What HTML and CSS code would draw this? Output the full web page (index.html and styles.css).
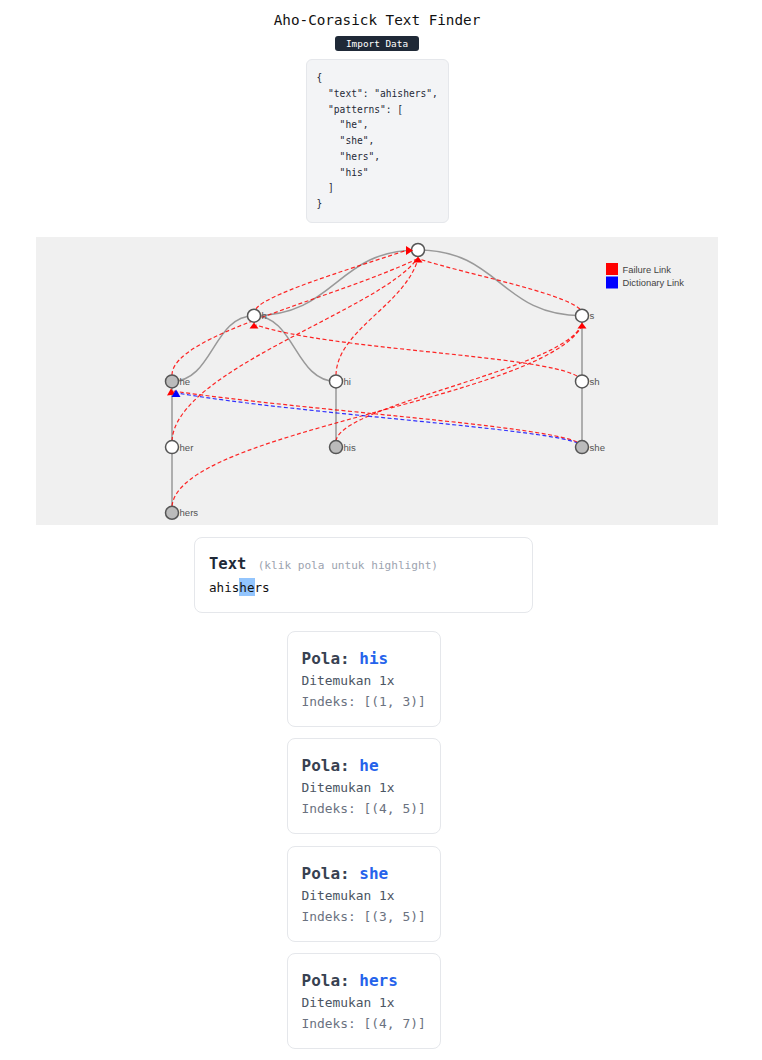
FILE: index.html
```html
<!DOCTYPE html>
<html>
<head>
<meta charset="utf-8">
<title>Aho-Corasick Text Finder</title>
<link rel="stylesheet" href="styles.css">
</head>
<body>
<div class="page">
  <h1 class="title">Aho-Corasick Text Finder</h1>
  <button class="import-btn">Import Data</button>
  <pre class="json-box">{
  "text": "ahishers",
  "patterns": [
    "he",
    "she",
    "hers",
    "his"
  ]
}</pre>
  <div class="graph">
    <svg class="graph-svg" width="682" height="288" viewBox="0 0 682 288">
      <g transform="translate(-36,-237)">
        <g class="tree-links">
          <path d="M418,250 C336,250 336,315.7 254,315.7"/>
          <path d="M418,250 C500,250 500,315.7 582,315.7"/>
          <path d="M254,315.7 C213,315.7 213,381.4 172,381.4"/>
          <path d="M254,315.7 C295,315.7 295,381.4 336,381.4"/>
          <path d="M582,315.7 L582,381.4"/>
          <path d="M172,381.4 L172,447.1"/>
          <path d="M172,447.1 L172,512.8"/>
          <path d="M336,381.4 L336,447.1"/>
          <path d="M582,381.4 L582,447.1"/>
        </g>
        <g class="fail-links">
          <path d="M256,309 C265,295 340,272 406,250.5"/>
          <path d="M580,309 C560,292 470,275 419,259"/>
          <path d="M172,375 C172,335 330,300 417,259"/>
          <path d="M172,441 C175,370 380,310 417,259"/>
          <path d="M336,375 C337,330 405,305 418,259"/>
          <path d="M577,376 C540,355 330,350 256,325"/>
          <path d="M336,441 C340,405 560,370 581,326"/>
          <path d="M172,506 C180,430 540,400 582,326"/>
          <path d="M577,442 C540,425 300,410 173,391"/>
        </g>
        <g class="dict-links">
          <path d="M578,443 C540,428 300,414 177,393"/>
        </g>
        <g class="nodes">
          <circle cx="418" cy="250" r="6.5" class="node"/>
          <circle cx="254" cy="315.7" r="6.5" class="node"/>
          <circle cx="582" cy="315.7" r="6.5" class="node"/>
          <circle cx="172" cy="381.4" r="6.5" class="node out"/>
          <circle cx="336" cy="381.4" r="6.5" class="node"/>
          <circle cx="582" cy="381.4" r="6.5" class="node"/>
          <circle cx="172" cy="447.1" r="6.5" class="node"/>
          <circle cx="336" cy="447.1" r="6.5" class="node out"/>
          <circle cx="582" cy="447.1" r="6.5" class="node out"/>
          <circle cx="172" cy="512.8" r="6.5" class="node out"/>
        </g>
        <g class="labels">
          <text x="261.5" y="319.2">h</text>
          <text x="589.5" y="319.2">s</text>
          <text x="179.5" y="384.9">he</text>
          <text x="343.5" y="384.9">hi</text>
          <text x="589.5" y="384.9">sh</text>
          <text x="179.5" y="450.6">her</text>
          <text x="343.5" y="450.6">his</text>
          <text x="589.5" y="450.6">she</text>
          <text x="179.5" y="516.3">hers</text>
        </g>
        <g class="arrows-red">
          <polygon points="406,246 413,250.5 406,255"/>
          <polygon points="418,256.5 422.5,262.5 413.5,262.5"/>
          <polygon points="254,322.5 258.5,328.5 249.5,328.5"/>
          <polygon points="582,322.5 586.5,328.5 577.5,328.5"/>
          <polygon points="171,388.5 175.5,394.5 167,395.5"/>
        </g>
        <g class="arrows-blue">
          <polygon points="176,389.5 180.5,397 171.5,397"/>
        </g>
        <g class="legend">
          <rect x="606" y="263" width="12" height="12" class="leg-red"/>
          <rect x="606" y="276.5" width="12" height="12" class="leg-blue"/>
          <text x="622.5" y="272.8">Failure Link</text>
          <text x="622.5" y="286.3">Dictionary Link</text>
        </g>
      </g>
    </svg>
  </div>
  <div class="results">
    <div class="text-card">
      <h2 class="text-head">Text <span class="hint">(klik pola untuk highlight)</span></h2>
      <div class="text-body">ahis<mark class="hl">he</mark>rs</div>
    </div>
    <div class="pattern-list">
      <div class="pattern-card">
        <h3 class="pola">Pola: <span class="pat">his</span></h3>
        <div class="found">Ditemukan 1x</div>
        <div class="found idx">Indeks: [(1, 3)]</div>
      </div>
      <div class="pattern-card">
        <h3 class="pola">Pola: <span class="pat">he</span></h3>
        <div class="found">Ditemukan 1x</div>
        <div class="found idx">Indeks: [(4, 5)]</div>
      </div>
      <div class="pattern-card">
        <h3 class="pola">Pola: <span class="pat">she</span></h3>
        <div class="found">Ditemukan 1x</div>
        <div class="found idx">Indeks: [(3, 5)]</div>
      </div>
      <div class="pattern-card">
        <h3 class="pola">Pola: <span class="pat">hers</span></h3>
        <div class="found">Ditemukan 1x</div>
        <div class="found idx">Indeks: [(4, 7)]</div>
      </div>
    </div>
  </div>
</div>
</body>
</html>
```
FILE: styles.css
```css
html, body {
  margin: 0;
  padding: 0;
  background: #ffffff;
}

body {
  font-family: "DejaVu Sans Mono", "Liberation Mono", monospace;
  color: #111827;
}

.page {
  width: 754px;
  display: flex;
  flex-direction: column;
  align-items: center;
}

.title {
  margin: 11px 0 0;
  font-size: 14.3px;
  line-height: 18px;
  font-weight: normal;
  color: #111111;
}

.import-btn {
  margin-top: 7px;
  height: 15px;
  padding: 0 11px;
  font-family: "DejaVu Sans Mono", "Liberation Mono", monospace;
  font-size: 9.4px;
  line-height: 15px;
  background: #1f2937;
  color: #ffffff;
  border: 0;
  border-radius: 3px;
}

.json-box {
  margin: 8px 0 0;
  width: 143px;
  box-sizing: border-box;
  padding: 10px 10px;
  background: #f3f4f6;
  border: 1px solid #e5e7eb;
  border-radius: 6px;
  font-family: "DejaVu Sans Mono", "Liberation Mono", monospace;
  font-size: 9.6px;
  line-height: 15.75px;
  color: #1f2937;
}

.graph {
  margin-top: 14px;
  width: 682px;
  height: 288px;
  background: #f0f0f0;
}

.graph-svg {
  display: block;
}

.tree-links path {
  fill: none;
  stroke: #999999;
  stroke-width: 1.5;
}

.fail-links path {
  fill: none;
  stroke: rgba(255, 0, 0, 0.85);
  stroke-width: 1.2;
  stroke-dasharray: 4 2.5;
}

.dict-links path {
  fill: none;
  stroke: rgba(0, 0, 255, 0.8);
  stroke-width: 1.2;
  stroke-dasharray: 4 2.5;
}

.node {
  fill: #ffffff;
  stroke: #555555;
  stroke-width: 1.5;
}

.node.out {
  fill: #bbbbbb;
}

.labels text {
  font-family: "Liberation Sans", Arial, sans-serif;
  font-size: 9.6px;
  fill: #555555;
}

.arrows-red polygon {
  fill: #ff0000;
}

.arrows-blue polygon {
  fill: #0000ff;
}

.leg-red {
  fill: #ff0000;
}

.leg-blue {
  fill: #0000ff;
}

.legend text {
  font-family: "Liberation Sans", Arial, sans-serif;
  font-size: 9.4px;
  fill: #444444;
}

.results {
  align-self: stretch;
  margin-top: 12px;
  padding-right: 27px;
  display: flex;
  flex-direction: column;
  align-items: center;
}

.text-card {
  width: 339px;
  box-sizing: border-box;
  border: 1px solid #e5e7eb;
  border-radius: 8px;
  padding: 15px 14px 14px;
}

.text-head {
  margin: 0;
  font-size: 15.5px;
  line-height: 22px;
  font-weight: bold;
  color: #1f2937;
}

.hint {
  margin-left: 2px;
  font-size: 11.1px;
  font-weight: normal;
  color: #9ca3af;
}

.text-body {
  font-size: 12.6px;
  line-height: 21px;
  color: #111111;
}

.hl {
  background: #93c5fd;
  color: inherit;
  padding: 1.7px 0;
}

.pattern-list {
  margin-top: 18px;
  display: flex;
  flex-direction: column;
  gap: 11.5px;
}

.pattern-card {
  width: 154px;
  box-sizing: border-box;
  border: 1px solid #e5e7eb;
  border-radius: 8px;
  padding: 16px 6px 14px 14px;
  white-space: nowrap;
}

.pola {
  margin: 0;
  font-size: 16px;
  line-height: 22px;
  font-weight: bold;
  color: #374151;
}

.pat {
  color: #2563eb;
}

.found {
  font-size: 12.9px;
  line-height: 21px;
  color: #4b5563;
}

.found.idx {
  color: #6b7280;
}
```
